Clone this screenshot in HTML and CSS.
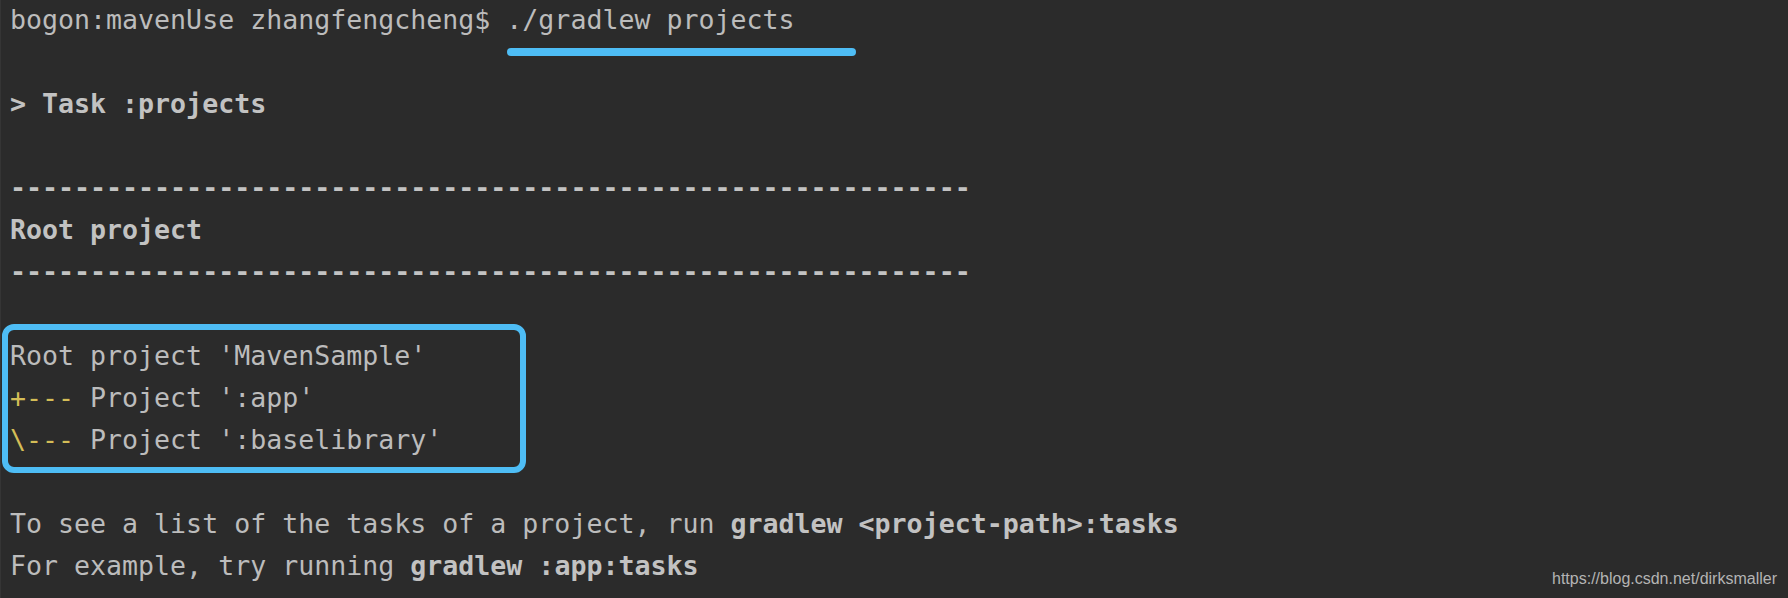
FILE: index.html
```html
<!DOCTYPE html>
<html>
<head>
<meta charset="utf-8">
<link rel="stylesheet" href="styles.css">
</head>
<body>
<div class="term">
  <div class="line prompt">bogon:mavenUse zhangfengcheng$ ./gradlew projects<span class="mark-underline"></span></div>
  <div class="line"> </div>
  <div class="line b">&gt; Task :projects</div>
  <div class="line"> </div>
  <div class="line b">------------------------------------------------------------</div>
  <div class="line b">Root project</div>
  <div class="line b">------------------------------------------------------------</div>
  <div class="line"> </div>
  <div class="group">
    <span class="mark-box"></span>
    <div class="line">Root project 'MavenSample'</div>
    <div class="line"><span class="y">+---</span> Project ':app'</div>
    <div class="line"><span class="y">\---</span> Project ':baselibrary'</div>
  </div>
  <div class="line"> </div>
  <div class="line">To see a list of the tasks of a project, run <b>gradlew &lt;project-path&gt;:tasks</b></div>
  <div class="line">For example, try running <b>gradlew :app:tasks</b></div>
</div>
<div class="watermark">https://blog.csdn.net/dirksmaller</div>
</body>
</html>
```
FILE: styles.css
```css
html, body {
  margin: 0;
  padding: 0;
  background: #2b2b2b;
  height: 598px;
  overflow: hidden;
}
body {
  position: relative;
  border-left: 1px solid #353535;
  box-sizing: border-box;
}
.term {
  padding: 0 0 0 9px;
  margin-top: -1px;
  font-family: "DejaVu Sans Mono", "Liberation Mono", monospace;
  font-size: 26.6px;
  line-height: 42px;
  color: #bcbcbc;
}
.line {
  white-space: pre;
  height: 42px;
}
.b, b {
  font-weight: bold;
  color: #c2c2c2;
}
.y {
  color: #d4bd57;
}
.prompt {
  position: relative;
}
.mark-underline {
  position: absolute;
  left: 497px;
  top: 49px;
  width: 349px;
  height: 8px;
  border-radius: 4px;
  background: #4ebdf5;
}
.group {
  position: relative;
}
.mark-box {
  position: absolute;
  left: -8px;
  top: -11px;
  width: 524px;
  height: 149px;
  box-sizing: border-box;
  border: 6px solid #4ebdf5;
  border-radius: 12px;
}
.watermark {
  position: absolute;
  right: 11px;
  bottom: 10px;
  font-family: "Liberation Sans", Arial, sans-serif;
  font-size: 16px;
  color: #b4b4b4;
}
```
